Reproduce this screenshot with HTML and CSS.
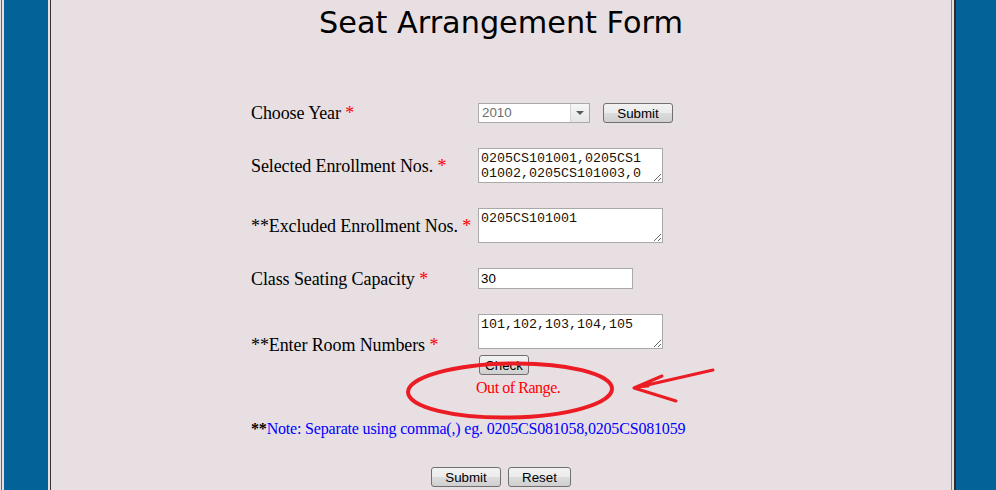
FILE: index.html
```html
<!DOCTYPE html>
<html>
<head>
<meta charset="utf-8">
<title>Seat Arrangement Form</title>
<link rel="stylesheet" href="styles.css">
</head>
<body>
<div class="page">
  <h1 class="title">Seat Arrangement Form</h1>
  <form class="form">
    <div class="row row-year">
      <label class="label">Choose Year <span class="req">*</span></label>
      <div class="field field-inline">
        <div class="select">
          <span class="select-value">2010</span>
          <span class="select-arrow"><span class="tri"></span></span>
        </div>
        <button type="button" class="btn btn-year">Submit</button>
      </div>
    </div>
    <div class="row row-gap">
      <label class="label">Selected Enrollment Nos. <span class="req">*</span></label>
      <div class="field">
        <textarea class="area area-scroll">0205CS101001,0205CS101002,0205CS101003,0205CS101004,0205CS101005</textarea>
      </div>
    </div>
    <div class="row row-gap">
      <label class="label">**Excluded Enrollment Nos. <span class="req">*</span></label>
      <div class="field">
        <textarea class="area">0205CS101001</textarea>
      </div>
    </div>
    <div class="row row-gap">
      <label class="label">Class Seating Capacity <span class="req">*</span></label>
      <div class="field">
        <input class="text" type="text" value="30">
      </div>
    </div>
    <div class="row row-gap">
      <label class="label">**Enter Room Numbers <span class="req">*</span></label>
      <div class="field field-stack">
        <textarea class="area">101,102,103,104,105</textarea>
        <button type="button" class="btn btn-check">Check</button>
      </div>
    </div>
    <div class="row row-msg">
      <span></span>
      <div class="error">Out of Range.</div>
    </div>
    <p class="note"><b class="note-star">**</b>Note: Separate using comma(,) eg. 0205CS081058,0205CS081059</p>
    <div class="actions">
      <button type="submit" class="btn btn-submit">Submit</button>
      <button type="reset" class="btn btn-reset">Reset</button>
    </div>
  </form>
</div>
<svg class="annotation" width="996" height="490" viewBox="0 0 996 490">
  <ellipse cx="510" cy="390.5" rx="102" ry="27" fill="none" stroke="#ec1c24" stroke-width="4" transform="rotate(-1 510 390)"/>
  <path d="M713 370 L634 388 M634 388 L662 376 M634 388 L676 401 M636 387 L648 386" fill="none" stroke="#ec1c24" stroke-width="3" stroke-linecap="round" stroke-linejoin="round"/>
</svg>
</body>
</html>
```
FILE: styles.css
```css
html, body {
  margin: 0;
  padding: 0;
}
body {
  background: #036399;
  min-height: 100vh;
  position: relative;
  overflow: hidden;
  box-shadow: inset 1px 0 0 #e6dfe2, inset 2px 0 0 #6b6366, inset 4px 0 0 #e6dfe2;
}
.page {
  margin-left: 50px;
  width: 900px;
  min-height: 100vh;
  background: #e7dfe2;
  border-left: 1px solid #3a3434;
  border-right: 1px solid #8a8386;
  box-shadow: -2px 0 0 #e6dfe2, 2px 0 0 #e6dfe2, 4px 0 0 #2e2a2b;
}
.title {
  margin: 0;
  padding-top: 5px;
  font-family: "DejaVu Sans", Verdana, sans-serif;
  font-weight: normal;
  font-size: 30.3px;
  line-height: 36px;
  text-align: center;
  color: #000;
}
.form {
  margin: 0;
  padding: 62px 0 0 200px;
}
.row {
  display: grid;
  grid-template-columns: 227px auto;
  align-items: center;
}
.row-year {
  height: 20px;
}
.row-gap {
  margin-top: 25px;
}
.row-year + .row-gap {
  margin-top: 25px;
}
.label {
  font-family: "Liberation Serif", "Times New Roman", serif;
  font-size: 18px;
  line-height: 20px;
  letter-spacing: -0.1px;
  color: #000;
}
.req {
  color: #ff0000;
}
.field {
  display: flex;
}
.field-inline {
  align-items: center;
}
.field-stack {
  flex-direction: column;
  align-items: flex-start;
  gap: 6px;
}
.select {
  box-sizing: border-box;
  width: 112px;
  height: 20px;
  border: 1px solid #a9a9a9;
  background: #fff;
  display: flex;
  align-items: stretch;
}
.select-value {
  flex: 1;
  padding-left: 3px;
  font-family: "Liberation Sans", Arial, sans-serif;
  font-size: 13.33px;
  line-height: 18px;
  color: #6d6d6d;
}
.select-arrow {
  width: 18px;
  border-left: 1px solid #d4d4d4;
  background: linear-gradient(#f6f6f6, #e6e6e6);
  display: flex;
  align-items: center;
  justify-content: center;
}
.tri {
  width: 0;
  height: 0;
  border-left: 4px solid transparent;
  border-right: 4px solid transparent;
  border-top: 4px solid #5a5a5a;
}
.btn {
  box-sizing: border-box;
  height: 20px;
  padding: 0;
  border: 1px solid #707070;
  border-radius: 3px;
  background: linear-gradient(#f2f2f2 0%, #ebebeb 50%, #dddddd 50%, #cfcfcf 100%);
  font-family: "Liberation Sans", Arial, sans-serif;
  font-size: 13.33px;
  line-height: 17px;
  color: #000;
}
.btn-year {
  width: 70px;
  margin-left: 13px;
}
.btn-check {
  width: 50px;
  margin-left: 1px;
}
.btn-submit {
  width: 70px;
}
.btn-reset {
  width: 63px;
}
.area {
  box-sizing: border-box;
  width: 185px;
  height: 35px;
  margin: 0;
  padding: 2px 18px 2px 2px;
  border: 1px solid #a9a9a9;
  background: #fff;
  font-family: "Liberation Mono", "Courier New", monospace;
  font-size: 13.33px;
  line-height: 15px;
  color: #1a1208;
  overflow: hidden;
}
.text {
  box-sizing: border-box;
  width: 155px;
  height: 21px;
  margin: 0;
  padding: 1px 2px;
  border: 1px solid #a9a9a9;
  background: #fff;
  font-family: "Liberation Sans", Arial, sans-serif;
  font-size: 13.33px;
  color: #000;
}
.row-msg {
  margin-top: 4px;
}
.error {
  margin-left: -2px;
  font-family: "Liberation Serif", "Times New Roman", serif;
  font-size: 16px;
  line-height: 18px;
  letter-spacing: -0.45px;
  color: #ff0000;
}
.note {
  margin: 23px 0 0;
  font-family: "Liberation Serif", "Times New Roman", serif;
  font-size: 16px;
  line-height: 18px;
  letter-spacing: -0.18px;
  color: #0000ff;
}
.note-star {
  color: #000;
}
.actions {
  margin-top: 29px;
  margin-left: -200px;
  display: flex;
  justify-content: center;
  gap: 7px;
}
.annotation {
  position: absolute;
  left: 0;
  top: 0;
  pointer-events: none;
}
```
